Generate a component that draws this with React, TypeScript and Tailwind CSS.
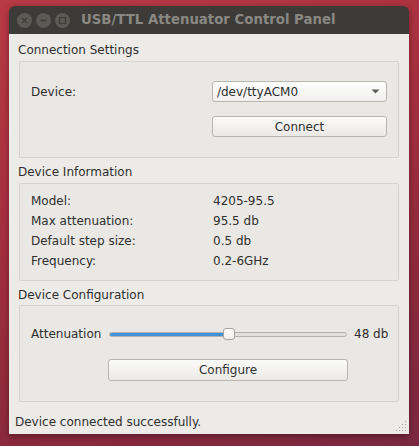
import React, { useState } from "react";

const FONT = { fontFamily: '"DejaVu Sans", "Liberation Sans", sans-serif' };

function WindowButton({ kind }: { kind: "close" | "min" | "max" }) {
  return (
    <div className="w-[15px] h-[15px] rounded-full bg-[#5b5a55] flex items-center justify-center">
      <svg width="9" height="9" viewBox="0 0 9 9">
        {kind === "close" && (
          <path d="M2 2 L7 7 M7 2 L2 7" stroke="#3c3b37" strokeWidth="1.3" />
        )}
        {kind === "min" && <path d="M1.5 4.5 H7.5" stroke="#3c3b37" strokeWidth="1.3" />}
        {kind === "max" && (
          <rect x="1.5" y="1.5" width="6" height="6" fill="none" stroke="#3c3b37" strokeWidth="1.2" />
        )}
      </svg>
    </div>
  );
}

function QtButton({ label, className }: { label: string; className: string }) {
  return (
    <button
      className={`h-[21px] rounded-[3px] border border-[#b9b6b0] bg-gradient-to-b from-[#fbfbfa] to-[#ebe9e6] text-[12px] text-[#2f2f2f] leading-none ${className}`}
    >
      {label}
    </button>
  );
}

function GroupTitle({ text }: { text: string }) {
  return <div className="pl-[9px] h-[15px] leading-[15px] text-[12px] text-[#2f2f2f]">{text}</div>;
}

export default function App() {
  const [value] = useState(48);
  const pct = 0.487;

  const info = [
    ["Model:", "4205-95.5"],
    ["Max attenuation:", "95.5 db"],
    ["Default step size:", "0.5 db"],
    ["Frequency:", "0.2-6GHz"],
  ];

  return (
    <div
      className="w-[419px] h-[446px] pt-[6px] pl-[9px] bg-[linear-gradient(160deg,#b83a45_0%,#a8303f_35%,#8e2a3c_70%,#7a2840_100%)] overflow-hidden"
      style={FONT}
    >
      <div className="w-[400px] h-[428px] flex flex-col rounded-t-[6px] overflow-hidden shadow-[0_2px_6px_rgba(0,0,0,0.35)]">
        {/* title bar */}
        <div className="h-[28px] bg-[#3c3b37] flex items-center pl-[8px]">
          <div className="flex gap-[4px]">
            <WindowButton kind="close" />
            <WindowButton kind="min" />
            <WindowButton kind="max" />
          </div>
          <span className="ml-[11px] text-[13.3px] font-bold text-[#8a8882] whitespace-nowrap">
            USB/TTL Attenuator Control Panel
          </span>
        </div>

        {/* content */}
        <div className="relative flex-1 bg-[#edebe7] pt-[9px] flex flex-col">
          <GroupTitle text="Connection Settings" />
          <div className="mt-[3px] mx-[10px] h-[97px] border border-[#d6d3ce] rounded-[2px] bg-[#eae8e4] pt-[19px] pl-[11px] pr-[11px]">
            <div className="flex items-center h-[21px]">
              <span className="w-[182px] text-[12px] text-[#2f2f2f]">Device:</span>
              <div className="w-[176px] h-[21px] rounded-[3px] border border-[#b9b6b0] bg-gradient-to-b from-[#fdfdfd] to-[#f1f0ee] flex items-center justify-between pl-[4px] pr-[6px]">
                <span className="text-[12px] text-[#2f2f2f]">/dev/ttyACM0</span>
                <svg width="9" height="5" viewBox="0 0 9 5">
                  <path d="M0.5 0.5 H8.5 L4.5 4.5 Z" fill="#5c5c5c" />
                </svg>
              </div>
            </div>
            <div className="flex mt-[14px]">
              <div className="w-[182px]" />
              <QtButton label="Connect" className="w-[176px]" />
            </div>
          </div>

          <div className="mt-[7px]">
            <GroupTitle text="Device Information" />
          </div>
          <div className="mt-[3px] mx-[10px] h-[98px] border border-[#d6d3ce] rounded-[2px] bg-[#eae8e4] pt-[7px] pl-[11px]">
            {info.map(([k, v]) => (
              <div key={k} className="flex h-[20px] items-center text-[12px] text-[#2f2f2f]">
                <span className="w-[182px]">{k}</span>
                <span>{v}</span>
              </div>
            ))}
          </div>

          <div className="mt-[7px]">
            <GroupTitle text="Device Configuration" />
          </div>
          <div className="mt-[2px] mx-[10px] h-[97px] border border-[#d6d3ce] rounded-[2px] bg-[#eae8e4] pt-[21px] pl-[11px] pr-[8px]">
            <div className="flex items-center h-[14px]">
              <span className="w-[78px] shrink-0 text-[12px] text-[#2f2f2f]">Attenuation</span>
              <div className="relative w-[238px] shrink-0 h-[14px] flex items-center">
                <div className="w-full h-[5px] rounded-[3px] border border-[#b5b2ad] bg-[#e2e0dc] overflow-hidden flex">
                  <div className="h-full bg-[#3f93d6] border-r border-[#2b74b0]" style={{ width: `${pct * 100}%` }} />
                </div>
                <div
                  className="absolute top-[1px] w-[12px] h-[12px] rounded-[3px] border border-[#a8a5a0] bg-gradient-to-b from-[#ffffff] to-[#efeeec]"
                  style={{ left: `${pct * 238 - 2}px` }}
                />
              </div>
              <span className="ml-[7px] shrink-0 whitespace-nowrap text-[12px] text-[#2f2f2f]">{value} db</span>
            </div>
            <div className="mt-[16px] pl-[77px]">
              <QtButton label="Configure" className="w-[240px] h-[22px]" />
            </div>
          </div>

          <div className="mt-[13px] pl-[6px] h-[15px] leading-[15px] text-[12px] text-[#2f2f2f]">
            Device connected successfully.
          </div>

          {/* size grip */}
          <svg className="absolute right-[2px] bottom-[2px]" width="12" height="12" viewBox="0 0 12 12">
            {[
              [10, 1], [10, 4], [7, 4], [10, 7], [7, 7], [4, 7], [10, 10], [7, 10], [4, 10], [1, 10],
            ].map(([x, y]) => (
              <rect key={`${x}-${y}`} x={x} y={y} width="1" height="1" fill="#a8a59f" />
            ))}
          </svg>
        </div>
      </div>
    </div>
  );
}
